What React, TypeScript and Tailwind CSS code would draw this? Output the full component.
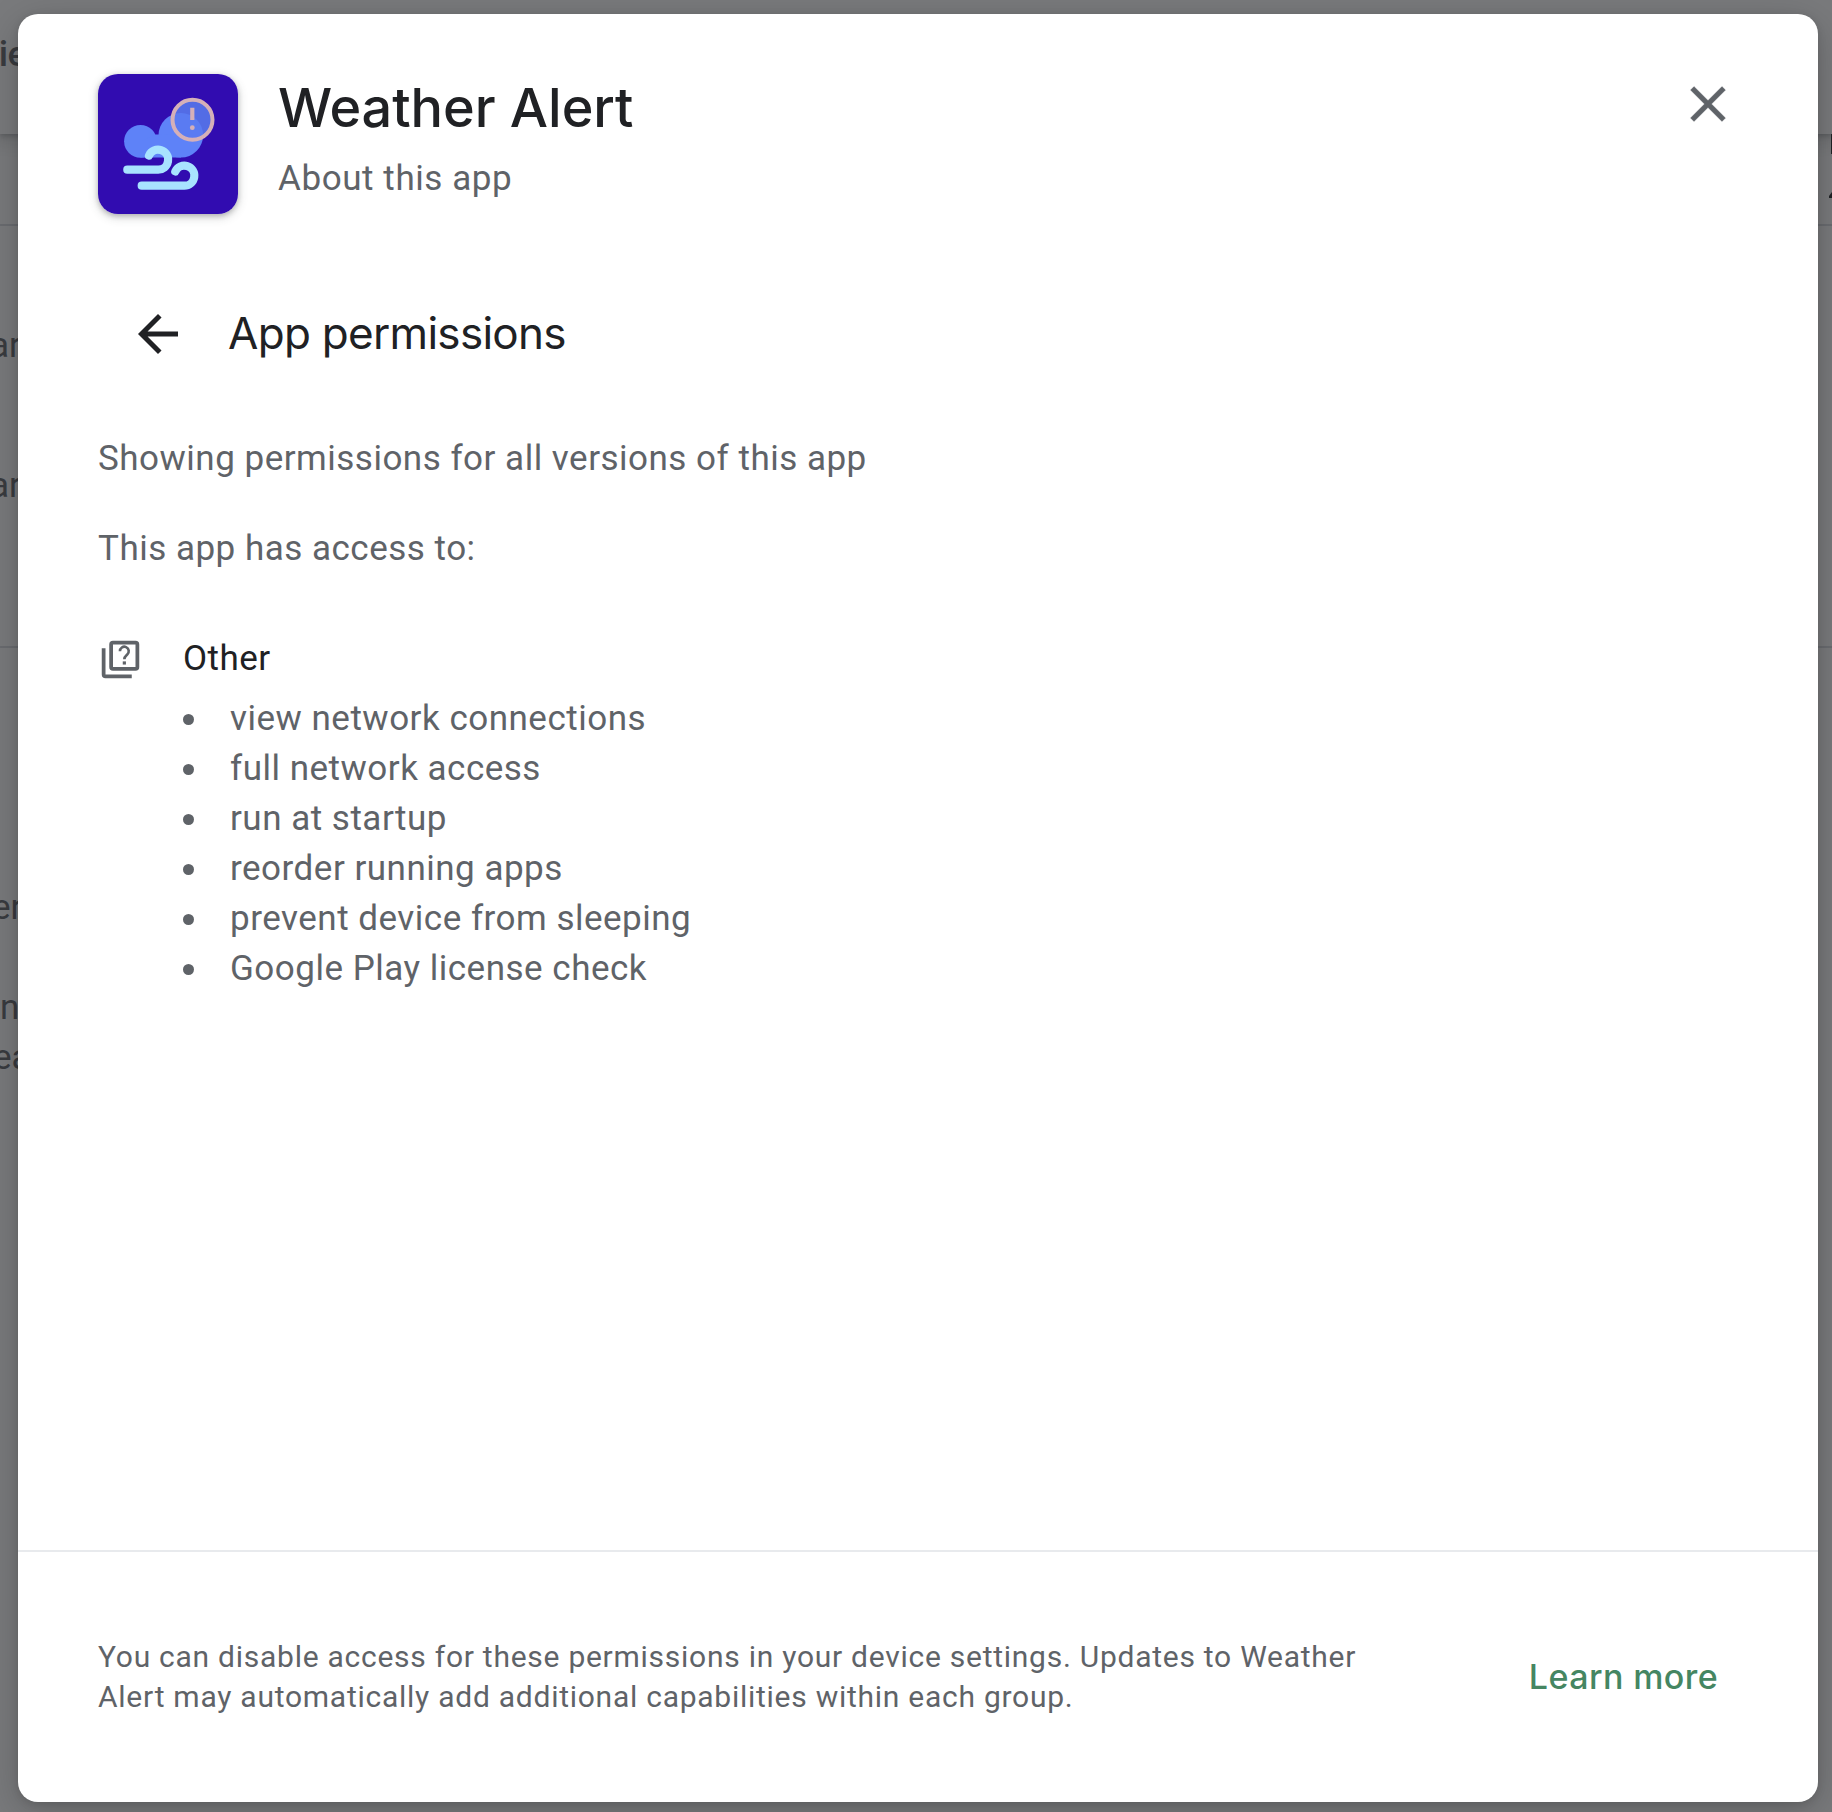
import { MdArrowBack } from "react-icons/md";

const permissions = [
  "view network connections",
  "full network access",
  "run at startup",
  "reorder running apps",
  "prevent device from sleeping",
  "Google Play license check",
];

function WeatherIcon() {
  return (
    <svg viewBox="0 0 140 140" className="h-[140px] w-[140px]" fill="none">
      <rect width="140" height="140" fill="#310cb0" />
      <circle cx="94.5" cy="45.7" r="20" fill="#546ce6" />
      <g fill="#5e82f8">
        <circle cx="42.5" cy="67.3" r="16.4" />
        <circle cx="82.8" cy="61.3" r="22.3" />
        <path d="M42.5 67L58 60.5H60.5L83 61V83.6H42.5z" />
      </g>
      <circle cx="94.5" cy="45.7" r="20" fill="#546ce6" fillOpacity="0.3" stroke="#d5b0b8" strokeWidth="4" />
      <path d="M92.2 33.7h4.2v12.4h-4.2z" fill="#d5b0b8" />
      <circle cx="94.3" cy="53.7" r="2.4" fill="#d5b0b8" />
      <g stroke="#a8e3ff" strokeWidth="8.2" strokeLinecap="round">
        <path d="M29.3 95.7H59.7A10 10 0 1 0 51 81.6" />
        <path d="M43.7 111.7H86.1A10 10 0 1 0 77.3 97.4" />
      </g>
    </svg>
  );
}

function CloseIcon() {
  return (
    <svg viewBox="0 0 24 24" className="size-[60px]" fill="currentColor" stroke="currentColor" strokeWidth="0.12">
      <path d="M19 6.41L17.59 5 12 10.59 6.41 5 5 6.41 10.59 12 5 17.59 6.41 19 12 13.41 17.59 19 19 17.59 13.41 12z" />
    </svg>
  );
}

function OtherPermissionsIcon() {
  return (
    <svg viewBox="0 0 24 24" className="mt-[3px] size-[45px] shrink-0" fill="none" stroke="currentColor">
      <rect x="7" y="3" width="14" height="14" rx="1" strokeWidth="2" />
      <path d="M3 6v14a1 1 0 0 0 1 1h14" strokeWidth="2" />
      <path d="M11.7 7.6a2.35 2.35 0 1 1 3.9 1.7c-.9.8-1.55 1.2-1.55 2.5" strokeWidth="1.4" />
      <path d="M13.2 13h1.7v1.7h-1.7z" fill="currentColor" stroke="none" />
    </svg>
  );
}

function PageBehind() {
  return (
    <div className="h-full w-full overflow-hidden bg-white font-[Roboto,sans-serif] text-[35px] leading-[50px] text-[#5f6368]">
      <div className="flex h-[134px] justify-between bg-white pt-[29px] shadow-[0_2px_5px_rgba(60,64,67,0.3),0_5px_15px_5px_rgba(60,64,67,0.15)]">
        <span className="-ml-px font-[Inter,sans-serif] text-[34px] font-semibold tracking-[-0.5px]">ie</span>
      </div>
      <div className="flex h-[90px] justify-end">
        <div className="flex w-[3px] flex-col items-end">
          <div className="h-[20px] w-px bg-[#202124]" />
          <svg viewBox="0 0 3 6" className="mt-[38px] h-[6px] w-[3px]" fill="#202124">
            <path d="M3 0v6H0V4z" />
          </svg>
        </div>
      </div>
      <div className="h-[2px] bg-[#dadce0]" />
      <div className="-ml-[10px] pt-[95px]">ar</div>
      <div className="-ml-[10px] pt-[90px]">ar</div>
      <div className="mt-[135px] h-[2px] bg-[#dadce0]" />
      <div className="-ml-[8px] pt-[235px]">er</div>
      <div className="pt-[50px]">n</div>
      <div className="-ml-[7px]">ea</div>
    </div>
  );
}

export default function App() {
  return (
    <div className="relative h-[1812px] w-[1832px] overflow-hidden">
      <PageBehind />
      <div className="absolute inset-0 flex bg-[#202124]/60 pt-[14px] pr-[14px] pb-[10px] pl-[18px]">
        <div
          role="dialog"
          className="flex flex-1 flex-col rounded-[20px] bg-white font-[Roboto,sans-serif] text-[35px] leading-[50px] tracking-[0.5px] text-[#5f6368] shadow-[0_2px_8px_rgba(0,0,0,0.12),0_10px_40px_rgba(0,0,0,0.2)]"
        >
          <header className="flex items-start px-20 pt-[60px]">
            <div className="overflow-hidden rounded-[20px] shadow-[0_2px_5px_rgba(60,64,67,0.3),0_3px_8px_2px_rgba(60,64,67,0.15)]">
              <WeatherIcon />
            </div>
            <div className="ml-10 flex-1">
              <h1 className="-mt-px mb-[11px] font-[Inter,sans-serif] text-[54px] leading-[70px] font-medium tracking-[-0.05px] text-[#202124]">
                Weather Alert
              </h1>
              <p className="tracking-[0.58px]">About this app</p>
            </div>
            <button aria-label="Close">
              <CloseIcon />
            </button>
          </header>
          <main className="flex-1 px-20">
            <div className="mt-[90px] flex items-center gap-10 pl-[30px] text-[#202124]">
              <MdArrowBack className="size-[60px]" />
              <h2 className="-mt-[2px] font-[Inter,sans-serif] text-[44px] leading-[60px] tracking-[-0.7px]">
                App permissions
              </h2>
            </div>
            <p className="mt-[70px]">Showing permissions for all versions of this app</p>
            <p className="mt-10">This app has access to:</p>
            <section className="mt-[60px] flex gap-10">
              <OtherPermissionsIcon />
              <div>
                <h3 className="mb-[10px] text-[#202124]">Other</h3>
                <ul>
                  {permissions.map((permission) => (
                    <li key={permission} className="flex items-center">
                      <span className="mt-px mr-[36px] size-[11px] rounded-full bg-[#5f6368]" />
                      {permission}
                    </li>
                  ))}
                </ul>
              </div>
            </section>
          </main>
          <footer className="flex h-[252px] items-center justify-between border-t-2 border-[#e8eaed] pr-[100px] pl-20">
            <p className="w-[1300px] text-[30px] leading-10 tracking-[0.74px]">
              You can disable access for these permissions in your device settings. Updates to Weather
              Alert may automatically add additional capabilities within each group.
            </p>
            <a className="font-[Inter,sans-serif] text-[34px] font-medium tracking-[0.4px] text-[#458662]">
              Learn more
            </a>
          </footer>
        </div>
      </div>
    </div>
  );
}
